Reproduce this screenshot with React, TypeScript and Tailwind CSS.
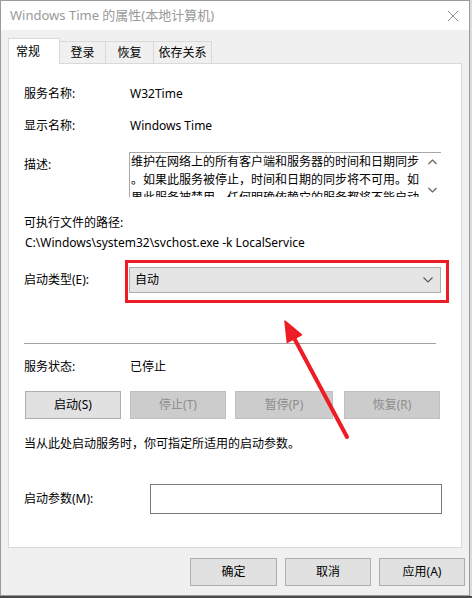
import React from 'react'

const font = "font-['Noto_Sans','Noto_Sans_CJK_SC',sans-serif]"

function Tab({ label, active, w }: { label: string; active?: boolean; w: string }) {
  if (active) {
    return (
      <div
        className={`${w} h-[26px] relative z-10 -mb-px bg-white border border-b-0 border-[#d9d9d9] flex items-start pt-[4px] pl-[7px] text-[12px] leading-[18px] text-black`}
      >
        {label}
      </div>
    )
  }
  return (
    <div
      className={`${w} h-[22px] -ml-px bg-[#f0f0f0] border border-b-0 border-[#d9d9d9] flex items-start justify-center pt-[2px] text-[12px] leading-[18px] text-black`}
    >
      {label}
    </div>
  )
}

function Btn({ label, disabled, w, className = '' }: { label: string; disabled?: boolean; w: string; className?: string }) {
  return (
    <div
      className={`${w} h-[28px] flex items-center justify-center border text-[12px] ${
        disabled ? 'bg-[#cccccc] border-[#bfbfbf] text-[#8d8d8d]' : 'bg-[#e1e1e1] border-[#adadad] text-black'
      } ${className}`}
    >
      {label}
    </div>
  )
}

export default function App() {
  return (
    <div className={`relative w-[472px] h-[598px] overflow-hidden bg-[#dcdcdc] ${font}`}>
      <div className="w-[470px] h-[596px] border border-[#9b9b9b] bg-[#f0f0f0] flex flex-col">
        {/* title bar */}
        <div className="h-[29px] bg-white flex items-center justify-between pl-[9px] pr-[8px]">
          <span className="text-[13px] text-[#999999]">Windows Time 的属性(本地计算机)</span>
          <svg width="12" height="12" viewBox="0 0 12 12" className="mr-[2px]">
            <path d="M1 1 L11 11 M11 1 L1 11" stroke="#8a8a8a" strokeWidth="1" />
          </svg>
        </div>

        {/* tabs */}
        <div className="pt-[8px] px-[7px] flex items-end">
          <Tab label="常规" active w="w-[52px]" />
          <Tab label="登录" w="w-[47px]" />
          <Tab label="恢复" w="w-[49px]" />
          <Tab label="依存关系" w="w-[59px]" />
        </div>

        {/* panel */}
        <div className="mx-[7px] h-[485px] bg-white border border-[#d9d9d9] pl-[15px] pt-[21px] text-[12px] leading-[18px] text-black">
          <div className="flex">
            <div className="w-[106px]">服务名称:</div>
            <div>W32Time</div>
          </div>
          <div className="flex mt-[14px]">
            <div className="w-[106px]">显示名称:</div>
            <div>Windows Time</div>
          </div>
          <div className="flex mt-[17px]">
            <div className="w-[105px] pt-[4px]">描述:</div>
            <div className="w-[312px] h-[45px] overflow-hidden border-t border-l border-[#a8a8a8] flex">
              <div className="flex-1 pl-[1px] whitespace-nowrap leading-[18px]">
                <div>维护在网络上的所有客户端和服务器的时间和日期同步</div>
                <div>。如果此服务被停止，时间和日期的同步将不可用。如</div>
                <div>果此服务被禁用，任何明确依赖它的服务都将不能启动</div>
              </div>
              <div className="w-[17px] flex flex-col items-center justify-between pt-[6px] pb-[4px]">
                <svg width="9" height="6" viewBox="0 0 9 6">
                  <path d="M0.5 5 L4.5 1 L8.5 5" stroke="#606060" strokeWidth="1.2" fill="none" />
                </svg>
                <svg width="9" height="6" viewBox="0 0 9 6">
                  <path d="M0.5 1 L4.5 5 L8.5 1" stroke="#606060" strokeWidth="1.2" fill="none" />
                </svg>
              </div>
            </div>
          </div>
          <div className="mt-[17px]">可执行文件的路径:</div>
          <div className="mt-[2px] pl-px">C:\Windows\system32\svchost.exe -k LocalService</div>
          <div className="flex items-center mt-[15px]">
            <div className="w-[105px]">启动类型(E):</div>
            <div className="relative">
              <div className="w-[312px] h-[26px] bg-[#e5e5e5] border border-[#adadad] flex items-center justify-between pl-[5px] pr-[7px]">
                <span>自动</span>
                <svg width="10" height="6" viewBox="0 0 10 6">
                  <path d="M0.5 0.5 L5 5 L9.5 0.5" stroke="#555" strokeWidth="1.1" fill="none" />
                </svg>
              </div>
              <div className="absolute left-[-4px] top-[-7px] w-[324px] h-[43px] border-[3px] border-[#ee1c25]" />
            </div>
          </div>
          <div className="mt-[50px] w-[412px] h-px bg-[#a0a0a0]" />
          <div className="flex mt-[14px]">
            <div className="w-[106px]">服务状态:</div>
            <div>已停止</div>
          </div>
          <div className="flex mt-[15px] ml-px">
            <Btn label="启动(S)" w="w-[96px]" />
            <Btn label="停止(T)" disabled w="w-[96px]" className="ml-[9px]" />
            <Btn label="暂停(P)" disabled w="w-[98px]" className="ml-[9px]" />
            <Btn label="恢复(R)" disabled w="w-[96px]" className="ml-[11px]" />
          </div>
          <div className="mt-[16px]">当从此处启动服务时，你可指定所适用的启动参数。</div>
          <div className="flex items-center mt-[31px]">
            <div className="w-[126px]">启动参数(M):</div>
            <div className="w-[292px] h-[30px] border border-[#7a7a7a] bg-white" />
          </div>
        </div>

        {/* bottom buttons */}
        <div className="flex justify-end pr-[4px] mt-[10px]">
          <Btn label="确定" w="w-[87px]" />
          <Btn label="取消" w="w-[86px]" className="ml-[8px]" />
          <Btn label="应用(A)" w="w-[86px]" className="ml-[8px]" />
        </div>
      </div>
      <div className="h-[2px] bg-[#4a4a4a]" />

      {/* annotation arrow */}
      <svg className="absolute left-0 top-0 pointer-events-none" width="472" height="598" viewBox="0 0 472 598">
        <line x1="347" y1="437" x2="293" y2="336" stroke="#ee1c25" strokeWidth="4" strokeLinecap="round" />
        <polygon points="285,321 301.5,334.8 287.3,342.4" fill="#ee1c25" stroke="#ee1c25" strokeWidth="1.5" strokeLinejoin="round" />
      </svg>
    </div>
  )
}
